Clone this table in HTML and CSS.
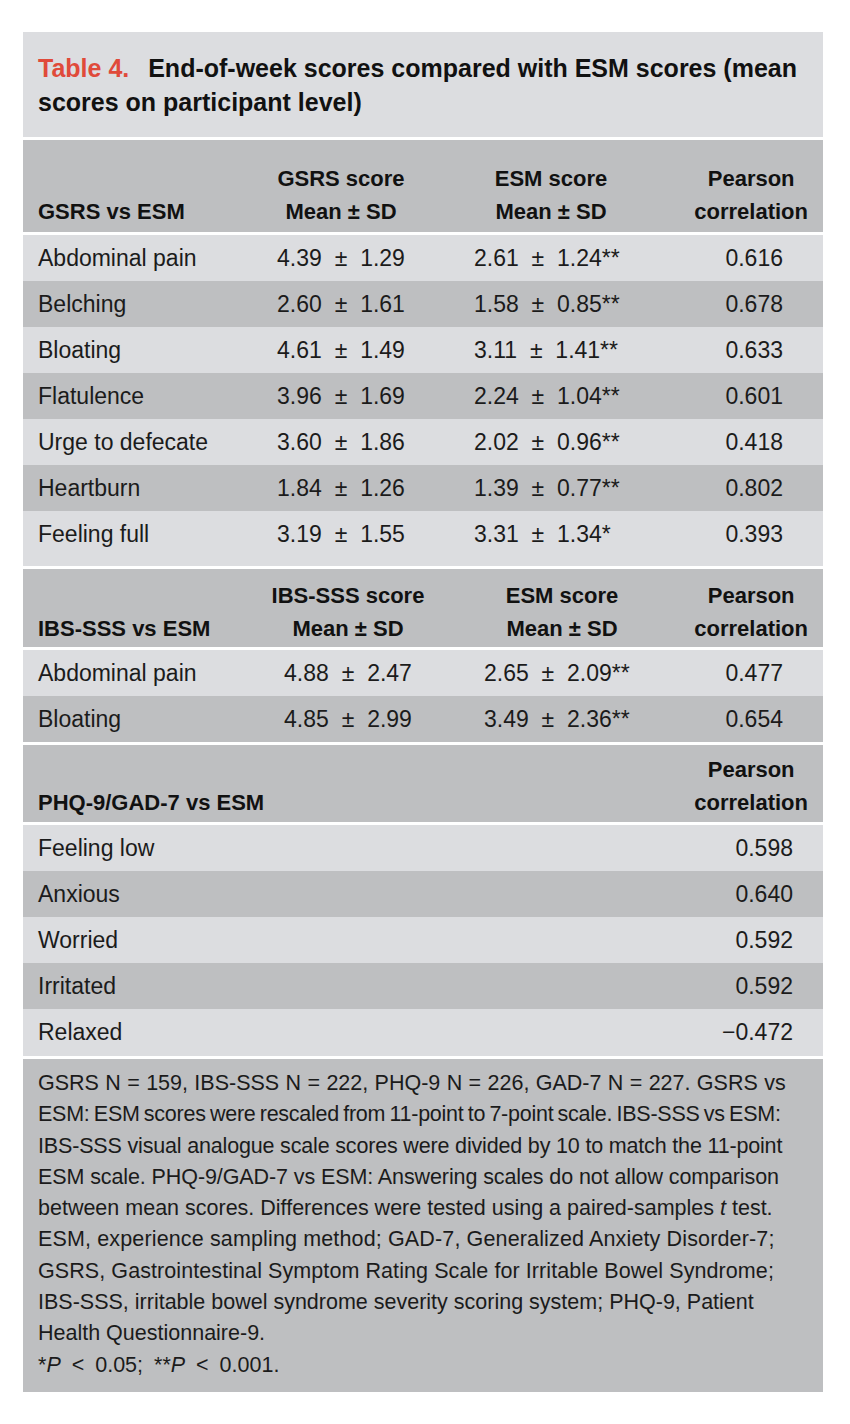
FILE: index.html
```html
<!DOCTYPE html>
<html lang="en">
<head>
<meta charset="utf-8">
<title>Table 4</title>
<link rel="stylesheet" href="styles.css">
</head>
<body>
<div class="table-box">
  <div class="caption"><span class="label">Table 4.</span> End-of-week scores compared with ESM scores (mean<br>scores on participant level)</div>

  <section class="sec s1">
    <div class="row head">
      <div class="cell">GSRS vs ESM</div>
      <div class="cell c">GSRS score<br>Mean ± SD</div>
      <div class="cell c">ESM score<br>Mean ± SD</div>
      <div class="cell r"><span class="stack">Pearson<br>correlation</span></div>
    </div>
    <div class="row data light">
      <div class="cell">Abdominal pain</div><div class="cell c num">4.39 ± 1.29</div><div class="cell l num">2.61 ± 1.24**</div><div class="cell r corr">0.616</div>
    </div>
    <div class="row data dark">
      <div class="cell">Belching</div><div class="cell c num">2.60 ± 1.61</div><div class="cell l num">1.58 ± 0.85**</div><div class="cell r corr">0.678</div>
    </div>
    <div class="row data light">
      <div class="cell">Bloating</div><div class="cell c num">4.61 ± 1.49</div><div class="cell l num">3.11 ± 1.41**</div><div class="cell r corr">0.633</div>
    </div>
    <div class="row data dark">
      <div class="cell">Flatulence</div><div class="cell c num">3.96 ± 1.69</div><div class="cell l num">2.24 ± 1.04**</div><div class="cell r corr">0.601</div>
    </div>
    <div class="row data light">
      <div class="cell">Urge to defecate</div><div class="cell c num">3.60 ± 1.86</div><div class="cell l num">2.02 ± 0.96**</div><div class="cell r corr">0.418</div>
    </div>
    <div class="row data dark">
      <div class="cell">Heartburn</div><div class="cell c num">1.84 ± 1.26</div><div class="cell l num">1.39 ± 0.77**</div><div class="cell r corr">0.802</div>
    </div>
    <div class="row data light last">
      <div class="cell">Feeling full</div><div class="cell c num">3.19 ± 1.55</div><div class="cell l num">3.31 ± 1.34*</div><div class="cell r corr">0.393</div>
    </div>
  </section>

  <section class="sec s2">
    <div class="row head">
      <div class="cell">IBS-SSS vs ESM</div>
      <div class="cell c">IBS-SSS score<br>Mean ± SD</div>
      <div class="cell c">ESM score<br>Mean ± SD</div>
      <div class="cell r"><span class="stack">Pearson<br>correlation</span></div>
    </div>
    <div class="row data light">
      <div class="cell">Abdominal pain</div><div class="cell c num">4.88 ± 2.47</div><div class="cell l num">2.65 ± 2.09**</div><div class="cell r corr">0.477</div>
    </div>
    <div class="row data dark">
      <div class="cell">Bloating</div><div class="cell c num">4.85 ± 2.99</div><div class="cell l num">3.49 ± 2.36**</div><div class="cell r corr">0.654</div>
    </div>
  </section>

  <section class="sec s3">
    <div class="row head">
      <div class="cell">PHQ-9/GAD-7 vs ESM</div>
      <div class="cell r"><span class="stack">Pearson<br>correlation</span></div>
    </div>
    <div class="row data light"><div class="cell">Feeling low</div><div class="cell r corr">0.598</div></div>
    <div class="row data dark"><div class="cell">Anxious</div><div class="cell r corr">0.640</div></div>
    <div class="row data light"><div class="cell">Worried</div><div class="cell r corr">0.592</div></div>
    <div class="row data dark"><div class="cell">Irritated</div><div class="cell r corr">0.592</div></div>
    <div class="row data light last3"><div class="cell">Relaxed</div><div class="cell r corr">−0.472</div></div>
  </section>

  <div class="notes">
    <div class="ln l1">GSRS N = 159, IBS-SSS N = 222, PHQ-9 N = 226, GAD-7 N = 227. GSRS vs</div>
    <div class="ln l2">ESM: ESM scores were rescaled from 11-point to 7-point scale. IBS-SSS vs ESM:</div>
    <div class="ln l3">IBS-SSS visual analogue scale scores were divided by 10 to match the 11-point</div>
    <div class="ln l4">ESM scale. PHQ-9/GAD-7 vs ESM: Answering scales do not allow comparison</div>
    <div class="ln">between mean scores. Differences were tested using a paired-samples <i>t</i> test.</div>
    <div class="ln l6">ESM, experience sampling method; GAD-7, Generalized Anxiety Disorder-7;</div>
    <div class="ln l7">GSRS, Gastrointestinal Symptom Rating Scale for Irritable Bowel Syndrome;</div>
    <div class="ln">IBS-SSS, irritable bowel syndrome severity scoring system; PHQ-9, Patient</div>
    <div class="ln">Health Questionnaire-9.</div>
    <div class="ln l10">*<i>P</i> &lt; 0.05; **<i>P</i> &lt; 0.001.</div>
  </div>
</div>
</body>
</html>
```

FILE: styles.css
```css
body {
  margin: 0;
  background: #ffffff;
  font-family: "Liberation Sans", Arial, sans-serif;
  color: #1b1b1b;
}

.table-box {
  width: 800px;
  margin: 32px 0 0 23px;
  display: flex;
  flex-direction: column;
  gap: 3px;
  background: #ffffff;
}

.caption {
  background: #dcdde0;
  padding: 19px 15px 18px;
  font-weight: bold;
  font-size: 25px;
  line-height: 34px;
  color: #111111;
}

.label {
  color: #e04a3a;
  margin-right: 12px;
}

.sec {
  display: flex;
  flex-direction: column;
}

.row {
  display: grid;
  padding: 0 15px;
}

.s1 .row { grid-template-columns: 202px 202px 218px 148px; }
.s2 .row { grid-template-columns: 210px 200px 228px 132px; }
.s3 .row { grid-template-columns: 1fr auto; }

.head {
  background: #bebfc1;
  font-weight: bold;
  font-size: 22px;
  line-height: 33px;
  align-items: end;
  color: #111111;
  margin-bottom: 3px;
}

.s1 .head { padding-top: 22px; padding-bottom: 4px; }
.s2 .head { padding-top: 10px; padding-bottom: 2px; }
.s3 .head { padding-top: 8px; padding-bottom: 3px; }

.data {
  height: 46px;
  font-size: 23px;
  line-height: 46px;
}

.data.last {
  height: 55px;
}

.data.last3 {
  height: 47px;
}

.light { background: #dcdde0; }
.dark { background: #bebfc1; }

.cell { white-space: nowrap; }
.c { text-align: center; }
.r { text-align: right; }
.l { text-align: left; }

.num { word-spacing: 0.28em; }

.s1 .l { padding-left: 32px; }
.s2 .l { padding-left: 36px; }

.stack {
  display: inline-block;
  text-align: center;
}

.s1 .corr, .s2 .corr { padding-right: 25px; }
.s3 .corr { padding-right: 15px; }

.notes {
  background: #bebfc1;
  padding: 9px 15px 11px;
  font-size: 21.5px;
  line-height: 31.3px;
}

.ln { white-space: nowrap; }
.l1 { word-spacing: 0.4px; }
.l2 { letter-spacing: -0.25px; word-spacing: -1.5px; }
.l3 { letter-spacing: -0.17px; }
.l4 { letter-spacing: -0.1px; }
.l6 { letter-spacing: 0.14px; }
.l7 { letter-spacing: 0.08px; }
.l10 { word-spacing: 5px; }
```
